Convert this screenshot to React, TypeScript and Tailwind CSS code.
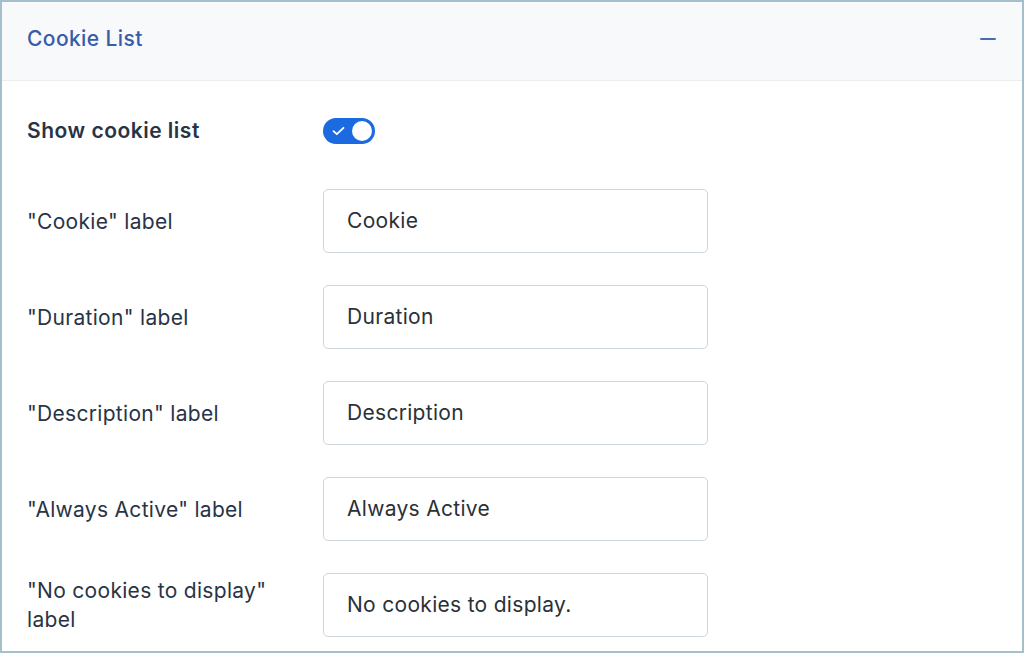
import React from "react";

const fields = [
  { label: '"Cookie" label', value: "Cookie" },
  { label: '"Duration" label', value: "Duration" },
  { label: '"Description" label', value: "Description" },
  { label: '"Always Active" label', value: "Always Active" },
  { label: '"No cookies to display" label', value: "No cookies to display." },
];

export default function App() {
  return (
    <div
      className="w-[1024px] h-[653px] overflow-hidden bg-white border-2 border-[#a5bfcc]"
      style={{ fontFamily: 'Inter, "Noto Sans", sans-serif' }}
    >
      <div className="h-[79px] bg-[#f8f9fb] border-b border-[#ececee] flex items-center justify-between pl-[25px] pr-[26px] pb-[4px]">
        <span className="text-[21px] font-medium text-[#3a5ba7] tracking-[0.4px]">Cookie List</span>
        <span className="block w-[16px] h-[2px] bg-[#4a6cb5] rounded-full" />
      </div>
      <div className="pl-[25px] pt-[37px]">
        <div className="flex items-center h-[26px]">
          <div className="w-[296px] text-[21px] font-semibold text-[#283446] tracking-[0.5px]">Show cookie list</div>
          <div className="w-[52px] h-[26px] rounded-full bg-[#1b6ae0] flex items-center justify-between pl-[9px] pr-[3px]">
            <svg width="13" height="10" viewBox="0 0 13 10" fill="none">
              <path d="M1.5 5.2 L4.8 8.2 L11.5 1.8" stroke="white" strokeWidth="1.8" strokeLinecap="round" strokeLinejoin="round" />
            </svg>
            <span className="block w-[20px] h-[20px] rounded-full bg-white" />
          </div>
        </div>
        <div className="mt-[45px] flex flex-col gap-[32px]">
          {fields.map((f) => (
            <div key={f.label} className="flex items-center h-[64px]">
              <div className="w-[282px] mr-[14px] text-[21px] leading-[29px] text-[#283446] tracking-[0.3px]">{f.label}</div>
              <div className="w-[385px] h-[64px] border border-[#cfd5dc] rounded-[5px] flex items-center pl-[23px] text-[21px] text-[#2a3138] tracking-[0.3px]">
                {f.value}
              </div>
            </div>
          ))}
        </div>
      </div>
    </div>
  );
}
